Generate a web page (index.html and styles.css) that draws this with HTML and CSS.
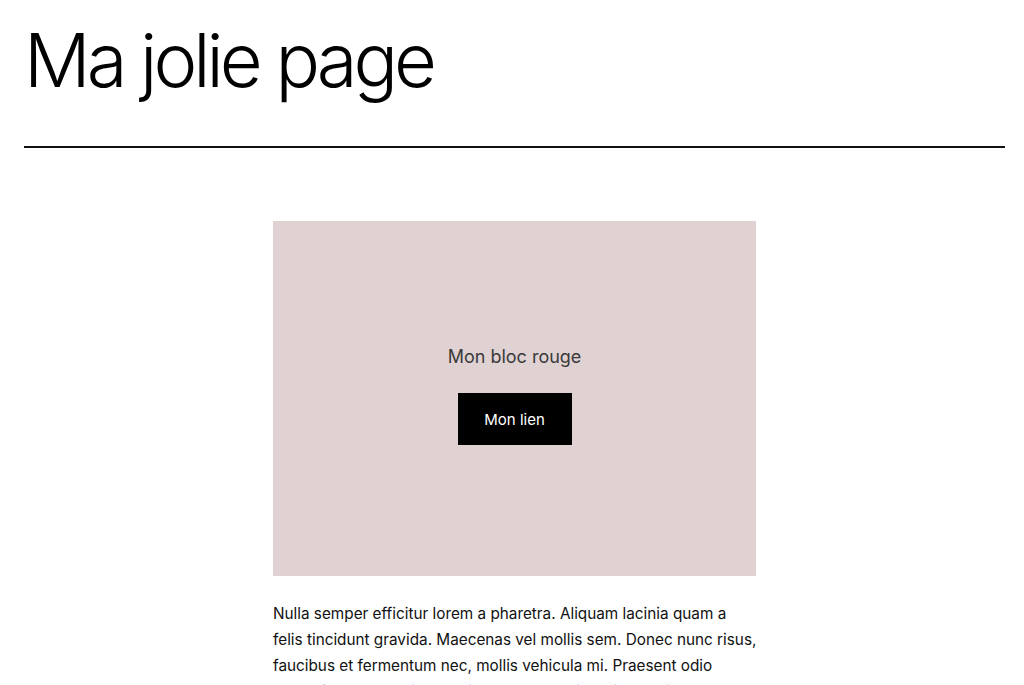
FILE: index.html
```html
<!DOCTYPE html>
<html lang="fr">
<head>
<meta charset="utf-8">
<title>Ma jolie page</title>
<link rel="stylesheet" href="styles.css">
</head>
<body>
<div class="page">
  <header class="header">
    <h1 class="title">Ma jolie page</h1>
    <hr class="rule">
  </header>
  <main class="content">
    <section class="bloc">
      <p class="bloc-text">Mon bloc rouge</p>
      <a class="bloc-link" href="#">Mon lien</a>
    </section>
    <p class="para">Nulla semper efficitur lorem a pharetra. Aliquam lacinia quam a felis tincidunt gravida. Maecenas vel mollis sem. Donec nunc risus, faucibus et fermentum nec, mollis vehicula mi. Praesent odio tellus, fermentum sit amet ligula sed, porttitor dictum nisl. Cras et nibh nisi.</p>
  </main>
</div>
</body>
</html>
```

FILE: styles.css
```css
html, body {
  margin: 0;
  padding: 0;
  background: #ffffff;
}
body {
  font-family: Inter, "Liberation Sans", sans-serif;
  color: #000;
}
.page {
  padding: 0 19px 0 24px;
}
.header {
  display: flex;
  flex-direction: column;
}
.title {
  margin: 16px 0 0 0;
  font-size: 74px;
  font-weight: 300;
  line-height: 89px;
  letter-spacing: -4px;
  color: #000;
}
.rule {
  margin: 41px 0 0 0;
  border: 0;
  height: 2px;
  background: #111;
}
.content {
  width: 483px;
  margin: 73px auto 0 auto;
}
.bloc {
  height: 355px;
  box-sizing: border-box;
  padding-bottom: 7px;
  background: #e0d1d2;
  display: flex;
  flex-direction: column;
  align-items: center;
  justify-content: center;
  gap: 24px;
}
.bloc-text {
  margin: 0;
  font-size: 18px;
  color: #3a3a3a;
  line-height: 24px;
}
.bloc-link {
  display: flex;
  align-items: center;
  justify-content: center;
  width: 114px;
  height: 52px;
  background: #000;
  color: #fff;
  font-size: 15px;
  text-decoration: none;
}
.para {
  width: 485.5px;
  margin: 25px 0 0 0;
  font-size: 15.3px;
  line-height: 26px;
  color: #111;
}
```
